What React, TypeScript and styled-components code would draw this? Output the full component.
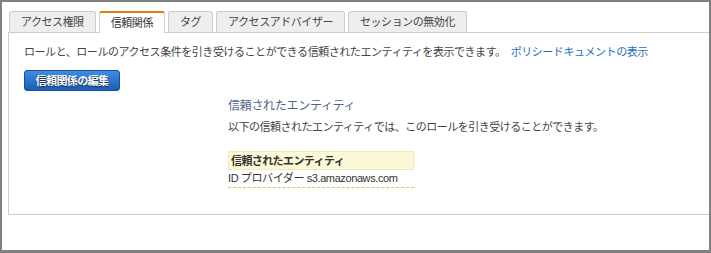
import React from "react";
import styled, { createGlobalStyle, css } from "styled-components";

const GlobalStyle = createGlobalStyle`
  html, body { margin: 0; padding: 0; background: #fff; }
  body { font-family: "Noto Sans CJK JP", "Noto Sans", sans-serif; color: #444; }
  * { box-sizing: border-box; }
`;

const Frame = styled.div`
  width: 711px;
  height: 253px;
  border: 2px solid #808080;
  border-bottom-width: 3px;
  background: #fff;
  padding: 9px 0 0 6px;
  display: flex;
  flex-direction: column;
`;

const TabBar = styled.div`
  display: flex;
  gap: 3px;
  padding-left: 1px;
  height: 21px;
  position: relative;
  z-index: 1;
`;

const Tab = styled.div<{ $active?: boolean }>`
  height: 21px;
  padding: 0 11px;
  border: 1px solid #cccccc;
  border-bottom: none;
  border-radius: 3px 3px 0 0;
  background: #eeeeee;
  font-size: 11px;
  letter-spacing: -0.45px;
  line-height: 19px;
  color: #444;
  white-space: nowrap;
  ${(p) =>
    p.$active &&
    css`
      height: 22px;
      background: #fff;
      border-top: 2px solid #e47911;
      line-height: 19px;
      color: #333;
    `}
`;

const Panel = styled.div`
  height: 183px;
  border: 1px solid #cccccc;
  border-right: none;
  padding: 10px 0 0 15px;
  display: flex;
  flex-direction: column;
  align-items: flex-start;
`;

const Description = styled.p`
  margin: 0;
  font-size: 11px;
  letter-spacing: -0.45px;
  line-height: 16px;
  color: #444;
`;

const Link = styled.a`
  color: #2370c0;
  text-decoration: none;
  margin-left: 5px;
`;

const Button = styled.button`
  margin-top: 11px;
  width: 96px;
  height: 21px;
  border: 1px solid #1b4f97;
  border-radius: 3px;
  background: linear-gradient(#3f8ce0, #1d5db6);
  color: #fff;
  font-family: inherit;
  font-size: 11px;
  font-weight: bold;
  letter-spacing: -0.6px;
  line-height: 17px;
  padding: 0;
  text-shadow: 0 1px 1px rgba(0, 0, 0, 0.7);
`;

const Section = styled.div`
  margin: 6px 0 0 204px;
  display: flex;
  flex-direction: column;
  align-items: flex-start;
`;

const SectionTitle = styled.h3`
  margin: 0;
  font-size: 12px;
  font-weight: normal;
  line-height: 16px;
  letter-spacing: -0.3px;
  color: #51658a;
`;

const SectionText = styled.p`
  margin: 5px 0 0;
  font-size: 11px;
  line-height: 16px;
  letter-spacing: -0.5px;
  color: #444;
`;

const Table = styled.div`
  margin-top: 17px;
  width: 186px;
  display: flex;
  flex-direction: column;
`;

const HeaderCell = styled.div`
  height: 19px;
  background: #fbf8d8;
  border: 1px solid #efe9bc;
  padding-left: 2px;
  font-size: 11px;
  font-weight: bold;
  letter-spacing: -0.6px;
  line-height: 16px;
  color: #333;
`;

const Cell = styled.div`
  height: 18px;
  border-bottom: 1px dashed #d2c860;
  font-size: 11px;
  letter-spacing: -0.4px;
  line-height: 17px;
  color: #333;
  white-space: nowrap;
  font-family: "Liberation Sans", "Noto Sans CJK JP", sans-serif;
`;

const tabs = ["アクセス権限", "信頼関係", "タグ", "アクセスアドバイザー", "セッションの無効化"];

export default function App() {
  return (
    <>
      <GlobalStyle />
      <Frame>
        <TabBar>
          {tabs.map((t) => (
            <Tab key={t} $active={t === "信頼関係"}>
              {t}
            </Tab>
          ))}
        </TabBar>
        <Panel>
          <Description>
            ロールと、ロールのアクセス条件を引き受けることができる信頼されたエンティティを表示できます。
            <Link href="#">ポリシードキュメントの表示</Link>
          </Description>
          <Button>信頼関係の編集</Button>
          <Section>
            <SectionTitle>信頼されたエンティティ</SectionTitle>
            <SectionText>以下の信頼されたエンティティでは、このロールを引き受けることができます。</SectionText>
            <Table>
              <HeaderCell>信頼されたエンティティ</HeaderCell>
              <Cell>ID プロバイダー s3.amazonaws.com</Cell>
            </Table>
          </Section>
        </Panel>
      </Frame>
    </>
  );
}
